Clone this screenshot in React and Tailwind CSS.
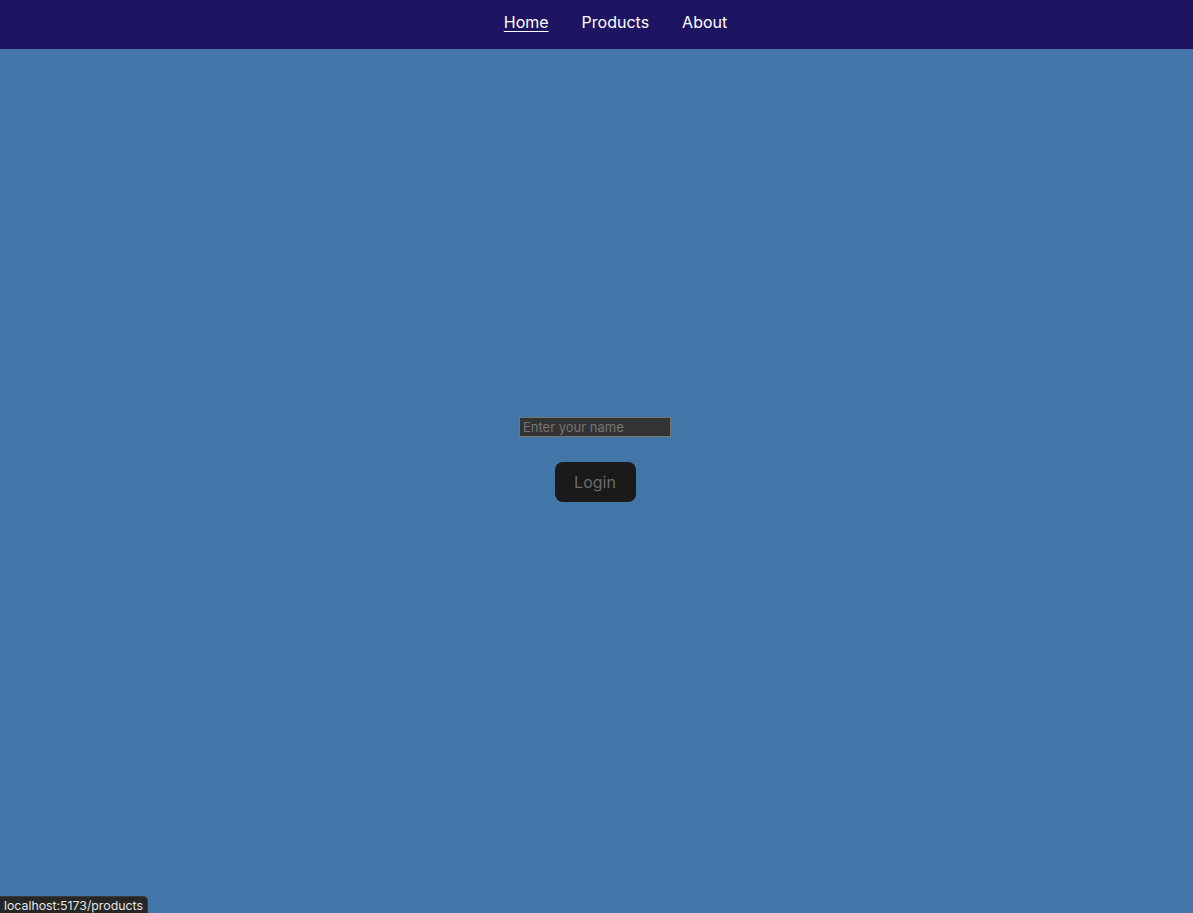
import React from "react";

export default function App() {
  return (
    <div className="relative min-h-[913px] w-full bg-[#4276a8] font-['Inter','Liberation_Sans',sans-serif]">
      <nav className="flex h-[49px] items-start justify-center gap-[33px] bg-[#1d1462] pl-[38px] pt-[11px] text-[16px] leading-[22px] text-white">
        <a className="underline underline-offset-[3px]">Home</a>
        <a>Products</a>
        <a>About</a>
      </nav>
      <main className="flex flex-col items-center pr-[3px] pt-[368px]">
        <input
          className="h-[20px] w-[152px] border border-[#767676] bg-[#333333] px-[3px] text-[13px] text-white outline-none placeholder:text-[#757575]"
          placeholder="Enter your name"
        />
        <button className="mt-[25px] h-[40px] w-[81px] rounded-[8px] bg-[#1a1a1a] text-[16px] text-[#6b6b6b]">
          Login
        </button>
      </main>
      <div className="absolute bottom-0 left-0 h-[17px] rounded-tr-[5px] border-t border-r border-[#3a3a3a] bg-[#262626] px-[4px] text-[12.3px] leading-[17px] text-[#e5e5e5]">
        localhost:5173/products
      </div>
    </div>
  );
}
